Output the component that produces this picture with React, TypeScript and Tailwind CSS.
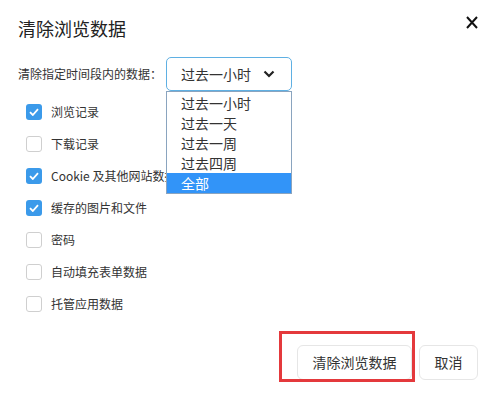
import React from "react";

interface Option {
    label: string;
    checked: boolean;
}

const options: Option[] = [
    { label: "浏览记录", checked: true },
    { label: "下载记录", checked: false },
    { label: "Cookie 及其他网站数据", checked: true },
    { label: "缓存的图片和文件", checked: true },
    { label: "密码", checked: false },
    { label: "自动填充表单数据", checked: false },
    { label: "托管应用数据", checked: false },
];

const ranges = ["过去一小时", "过去一天", "过去一周", "过去四周", "全部"];

const CheckBox: React.FC<{ checked: boolean }> = ({ checked }) =>
    checked ? (
        <span className="w-[16px] h-[16px] rounded-[3px] bg-[#3b9aea] flex items-center justify-center">
            <svg width="10" height="8" viewBox="0 0 10 8" fill="none">
                <path d="M1 4.2 L3.8 7 L9 1.2" stroke="white" strokeWidth="1.8" />
            </svg>
        </span>
    ) : (
        <span className="w-[16px] h-[16px] rounded-[3px] border border-[#cfcfcf] bg-white" />
    );

export default function App() {
    return (
        <div className="relative w-[495px] h-[394px] bg-white text-[#333] font-[family-name:'Noto_Sans_CJK_SC',sans-serif] flex flex-col">
            <div className="flex justify-between items-start pl-[18px] pr-[17px] pt-[15px]">
                <h1 className="text-[18px] leading-[26px] text-[#222]">清除浏览数据</h1>
                <svg width="12" height="13" viewBox="0 0 12 13" className="mt-[1px]">
                    <path d="M1 1 L11 12 M11 1 L1 12" stroke="#111" strokeWidth="2" />
                </svg>
            </div>

            <div className="flex items-center gap-[4px] pl-[18px] mt-[16px]">
                <span className="text-[12px] leading-[16px]">清除指定时间段内的数据：</span>
                <div className="w-[126px] h-[34px] border border-[#5fb0e3] rounded-[5px] flex items-center justify-between pl-[14px] pr-[16px]">
                    <span className="text-[14px]">过去一小时</span>
                    <svg width="12" height="8" viewBox="0 0 12 8" fill="none">
                        <path d="M1.5 1.5 L6 6 L10.5 1.5" stroke="#222" strokeWidth="2.2" />
                    </svg>
                </div>
            </div>

            <ul className="mt-[5px] pl-[26px]">
                {options.map((opt) => (
                    <li key={opt.label} className="h-[32px] flex items-center gap-[9px]">
                        <CheckBox checked={opt.checked} />
                        <span className="text-[12px]">{opt.label}</span>
                    </li>
                ))}
            </ul>

            <div className="flex justify-end gap-[7px] pr-[17px] mt-[25px]">
                <button className="w-[115px] h-[35px] border border-[#e6e6e6] rounded-[6px] bg-white text-[14px]">
                    清除浏览数据
                </button>
                <button className="w-[59px] h-[35px] border border-[#e6e6e6] rounded-[6px] bg-white text-[14px]">
                    取消
                </button>
            </div>

            {/* open dropdown */}
            <ul className="absolute left-[166px] top-[91px] w-[126px] border border-[#8aa4bf] bg-white pt-[1px]">
                {ranges.map((r, i) => (
                    <li
                        key={r}
                        className={
                            i === ranges.length - 1
                                ? "h-[20px] leading-[20px] pl-[14px] text-[14px] bg-[#3294f8] text-white"
                                : "h-[20px] leading-[20px] pl-[14px] text-[14px]"
                        }
                    >
                        {r}
                    </li>
                ))}
            </ul>

            {/* annotation box */}
            <div className="absolute left-[279px] top-[331px] w-[136px] h-[51px] border-[3px] border-[#e4393c]" />
        </div>
    );
}
